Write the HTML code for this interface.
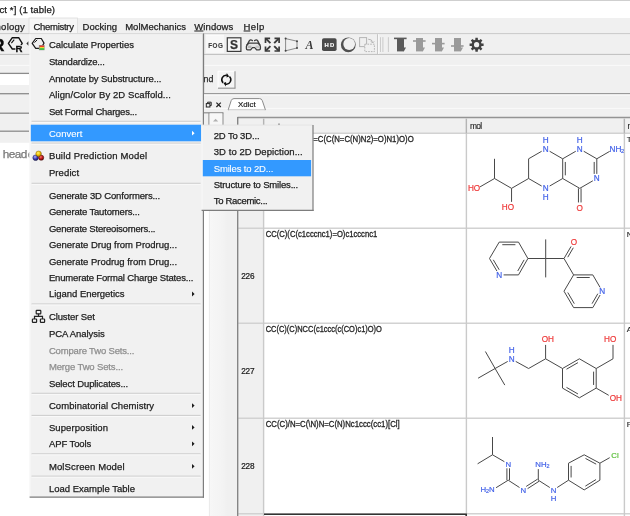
<!DOCTYPE html>
<html><head><meta charset="utf-8"><title>ICM Chemistry menu</title>
<style>
html,body{margin:0;padding:0;background:#f0f0f0;overflow:hidden}
svg{display:block;font-family:"Liberation Sans", sans-serif;filter:blur(0.35px)}
text{white-space:pre}
</style></head><body>
<svg width="630" height="516" viewBox="0 0 630 516">
<rect x="0" y="0" width="630" height="516" fill="#f0f0f0" />
<rect x="0" y="0" width="630" height="18" fill="#ffffff" />
<rect x="0" y="0" width="630" height="0.8" fill="#c4c4c4" />
<text x="-0.5" y="12.7" font-size="9.6" fill="#1a1a1a" textLength="55.5" lengthAdjust="spacing" stroke="#1a1a1a" stroke-width="0.25" >ct *] (1 table)</text>
<rect x="0" y="18" width="630" height="15.5" fill="#f0f0f0" />
<rect x="29" y="18" width="48.5" height="15.5" fill="#f6f6f6" stroke="#dcdcdc" stroke-width="0.8"/>
<text x="-4.4" y="30" font-size="9.5" fill="#1e1e1e" textLength="29.2" lengthAdjust="spacing" stroke="#1e1e1e" stroke-width="0.25" >nology</text>
<text x="33.5" y="30" font-size="9.5" fill="#1e1e1e" textLength="40.5" lengthAdjust="spacing" stroke="#1e1e1e" stroke-width="0.25" >Chemistry</text>
<text x="82.6" y="30" font-size="9.5" fill="#1e1e1e" textLength="34.4" lengthAdjust="spacing" stroke="#1e1e1e" stroke-width="0.25" >Docking</text>
<text x="125.2" y="30" font-size="9.5" fill="#1e1e1e" textLength="60.8" lengthAdjust="spacing" stroke="#1e1e1e" stroke-width="0.25" >MolMechanics</text>
<text x="194.3" y="30" font-size="9.5" fill="#1e1e1e" textLength="39.0" lengthAdjust="spacing" stroke="#1e1e1e" stroke-width="0.25" >Windows</text>
<line x1="194.3" y1="31" x2="203.4" y2="31" stroke="#1e1e1e" stroke-width="1" />
<text x="243.4" y="30" font-size="9.5" fill="#1e1e1e" textLength="20.8" lengthAdjust="spacing" stroke="#1e1e1e" stroke-width="0.25" >Help</text>
<line x1="243.6" y1="31" x2="250.3" y2="31" stroke="#1e1e1e" stroke-width="1" />
<line x1="0" y1="33.6" x2="630" y2="33.6" stroke="#c9c9c9" stroke-width="1" />
<line x1="0" y1="54.4" x2="630" y2="54.4" stroke="#bdbdbd" stroke-width="1" />
<line x1="0" y1="65.4" x2="630" y2="65.4" stroke="#fafafa" stroke-width="1" />
<line x1="0" y1="73.4" x2="29" y2="73.4" stroke="#8c8c8c" stroke-width="1.3" />
<rect x="0" y="74.2" width="29" height="10.8" fill="#ffffff" />
<line x1="0" y1="93.7" x2="29" y2="93.7" stroke="#8c8c8c" stroke-width="1.3" />
<line x1="0" y1="113.2" x2="29" y2="113.2" stroke="#8c8c8c" stroke-width="1.3" />
<line x1="0" y1="131.2" x2="29" y2="131.2" stroke="#8c8c8c" stroke-width="1.3" />
<rect x="0" y="142.8" width="209.5" height="380" fill="#ffffff" />
<text x="2.8" y="157.6" font-size="11.8" fill="#777777" textLength="24.5" lengthAdjust="spacing" stroke="#777777" stroke-width="0.25" >head</text>
<text x="27.8" y="157.6" font-size="11.8" fill="#777777" stroke="#777777" stroke-width="0.25" >er</text>
<line x1="203" y1="93.7" x2="630" y2="93.7" stroke="#9a9a9a" stroke-width="1.3" />
<line x1="203" y1="95" x2="630" y2="95" stroke="#fbfbfb" stroke-width="1" />
<line x1="203" y1="108.4" x2="630" y2="108.4" stroke="#fafafa" stroke-width="1" />
<g stroke="#111" fill="none" stroke-width="1.4" stroke-linejoin="round">
<path d="M8.4 43.3 L12.3 37.7 L18.7 37.7 L22.2 43.3 L18.7 49 L12.3 49 Z"/>
<path d="M11.4 43.2 L14.2 39.7" stroke-width="1.1"/>
</g>
<rect x="15.4" y="45.2" width="7.2" height="7" fill="#f0f0f0" />
<text x="15.5" y="51.8" font-size="9.6" fill="#0c0c0c" font-weight="bold" stroke="#0c0c0c" stroke-width="0.3">R</text>
<text x="-7.6" y="51.3" font-size="16.5" fill="#0c0c0c" font-weight="bold" stroke="#0c0c0c" stroke-width="0.4">R</text>
<path d="M28.4 41.2 L26.4 43.5 L28.4 45.8 Z" fill="#333"/>
<line x1="203.6" y1="33.6" x2="203.6" y2="93.7" stroke="#9a9a9a" stroke-width="1.2" />
<rect x="206" y="35.3" width="18" height="17.7" fill="#f8f8f8" />
<line x1="206" y1="35.3" x2="224" y2="35.3" stroke="#fdfdfd" stroke-width="1" />
<text x="208.2" y="48.3" font-size="6.3" fill="#3a3a3a" textLength="14.6" lengthAdjust="spacing" font-weight="bold" stroke="#3a3a3a" stroke-width="0.12" >FOG</text>
<rect x="227.3" y="37.8" width="13.6" height="13.6" fill="#f6f6f6" stroke="#3c3c3c" stroke-width="1.2"/>
<text x="230" y="49.2" font-size="12" fill="#333" font-weight="bold" stroke="#333" stroke-width="0.25" >S</text>
<g stroke="#3e3e3e" fill="none" stroke-width="1.3" stroke-linejoin="round" stroke-linecap="round">
<path d="M249.2 43.2 L257.8 43.2 Q260.4 44.4 260.4 46.4 L260.4 48.6 Q260.4 49.8 259.2 49.8 L256.6 49.8 L254.8 47.6 L252.4 47.6 L250.6 49.8 L247.6 49.8 Q246.4 49.8 246.4 48.6 L246.4 46.4 Q246.4 44.4 249.2 43.2 Z" fill="#e6e6e6"/>
<path d="M247 45 L249.4 40.6 Q250.2 39.6 251.4 40 L252.4 40.6"/>
<path d="M259.8 45 L257.6 40.6 Q256.8 39.6 255.6 40 L254.6 40.6"/>
</g>
<rect x="247.8" y="45.6" width="3.6" height="2.4" fill="#b8b8b8" />
<rect x="255.6" y="45.6" width="3.6" height="2.4" fill="#c8c8c8" />
<path d="M270.1 38.3 L265.5 38.3 L265.5 42.9" fill="none" stroke="#3a3a3a" stroke-width="1.7" stroke-linejoin="miter"/>
<path d="M265.9 38.699999999999996 L270.4 43.199999999999996" stroke="#3a3a3a" stroke-width="1.9"/>
<path d="M274.5 38.3 L279.1 38.3 L279.1 42.9" fill="none" stroke="#3a3a3a" stroke-width="1.7" stroke-linejoin="miter"/>
<path d="M278.70000000000005 38.699999999999996 L274.20000000000005 43.199999999999996" stroke="#3a3a3a" stroke-width="1.9"/>
<path d="M270.1 51 L265.5 51 L265.5 46.4" fill="none" stroke="#3a3a3a" stroke-width="1.7" stroke-linejoin="miter"/>
<path d="M265.9 50.6 L270.4 46.1" stroke="#3a3a3a" stroke-width="1.9"/>
<path d="M274.5 51 L279.1 51 L279.1 46.4" fill="none" stroke="#3a3a3a" stroke-width="1.7" stroke-linejoin="miter"/>
<path d="M278.70000000000005 50.6 L274.20000000000005 46.1" stroke="#3a3a3a" stroke-width="1.9"/>
<path d="M285.6 38.6 L297 41.2 L297 48 L285.6 50.8 Z" fill="none" stroke="#6a6a6a" stroke-width="0.75"/>
<circle cx="285.6" cy="38.6" r="1" fill="#444"/>
<circle cx="297" cy="41.2" r="1" fill="#444"/>
<circle cx="297" cy="48" r="1" fill="#444"/>
<circle cx="285.6" cy="50.8" r="1" fill="#444"/>
<text x="305.6" y="48.6" font-family="'Liberation Serif', serif" font-style="italic" font-weight="bold" font-size="12" fill="#3a3a3a">A</text>
<rect x="322" y="38.2" width="14.6" height="12.8" fill="#4a4a4a" rx="1.8"/>
<text x="324.4" y="46.9" font-size="5.9" fill="#ffffff" textLength="9.8" lengthAdjust="spacing" font-weight="bold" stroke="#ffffff" stroke-width="0.12" >HD</text>
<circle cx="348.3" cy="44.8" r="7.4" fill="#505050"/>
<circle cx="349.2" cy="44" r="5.9" fill="#f0f0f0"/>
<g stroke="#b4b4b4" fill="none" stroke-width="1">
<rect x="359.6" y="37.6" width="7" height="9"/>
<rect x="364.8" y="44.2" width="9.6" height="7.4" stroke-dasharray="1.6 1.1" fill="#f0f0f0"/>
<path d="M368.2 39.2 Q372.4 39 372.6 42.8 M371 41.4 L372.6 43 L374.2 41.4"/>
</g>
<line x1="377.6" y1="34.2" x2="377.6" y2="54" stroke="#c2c2c2" stroke-width="1" />
<line x1="378.6" y1="34.2" x2="378.6" y2="54" stroke="#fafafa" stroke-width="1" />
<line x1="380.8" y1="37.2" x2="380.8" y2="52" stroke="#b8b8b8" stroke-width="0.9" />
<line x1="382.8" y1="37.2" x2="382.8" y2="52" stroke="#b8b8b8" stroke-width="0.9" />
<line x1="381.8" y1="37.2" x2="381.8" y2="52" stroke="#fafafa" stroke-width="0.9" />
<line x1="388.4" y1="37.2" x2="388.4" y2="52" stroke="#c6c6c6" stroke-width="0.9" />
<rect x="397" y="38" width="7" height="13.4" fill="#5a5a5a" />
<rect x="394" y="37.6" width="12.6" height="1.6" fill="#5a5a5a" />
<path d="M403.8 47.4 L406 47.4 L403.8 51.4 Z" fill="#5a5a5a"/>
<rect x="416" y="38" width="7" height="13.4" fill="#9a9a9a" />
<rect x="413" y="40.2" width="12.6" height="1.6" fill="#9a9a9a" />
<path d="M422.8 47.4 L425 47.4 L422.8 51.4 Z" fill="#9a9a9a"/>
<rect x="435" y="38" width="7" height="13.4" fill="#9a9a9a" />
<rect x="432" y="42.8" width="12.6" height="1.6" fill="#9a9a9a" />
<path d="M441.8 47.4 L444 47.4 L441.8 51.4 Z" fill="#9a9a9a"/>
<rect x="454" y="38" width="7" height="13.4" fill="#9a9a9a" />
<rect x="451" y="45.2" width="12.6" height="1.6" fill="#9a9a9a" />
<path d="M460.8 47.4 L463 47.4 L460.8 51.4 Z" fill="#9a9a9a"/>
<path d="M481.53 43.39 L483.60 43.50 L483.60 45.90 L481.53 46.01 L481.01 47.26 L482.40 48.80 L480.70 50.50 L479.16 49.11 L477.91 49.63 L477.80 51.70 L475.40 51.70 L475.29 49.63 L474.04 49.11 L472.50 50.50 L470.80 48.80 L472.19 47.26 L471.67 46.01 L469.60 45.90 L469.60 43.50 L471.67 43.39 L472.19 42.14 L470.80 40.60 L472.50 38.90 L474.04 40.29 L475.29 39.77 L475.40 37.70 L477.80 37.70 L477.91 39.77 L479.16 40.29 L480.70 38.90 L482.40 40.60 L481.01 42.14 Z" fill="#414141"/>
<circle cx="476.6" cy="44.7" r="2.6" fill="#f0f0f0"/>
<text x="213.4" y="82" font-size="8.8" fill="#2a2a2a" text-anchor="end" stroke="#2a2a2a" stroke-width="0.25" >nd</text>
<rect x="218" y="71.2" width="17" height="17" fill="#f5f5f5" />
<line x1="218" y1="71.2" x2="235" y2="71.2" stroke="#ffffff" stroke-width="1" />
<line x1="218" y1="71.2" x2="218" y2="88.2" stroke="#ffffff" stroke-width="1" />
<line x1="218" y1="88.2" x2="235.4" y2="88.2" stroke="#9a9a9a" stroke-width="1.2" />
<line x1="235" y1="71.2" x2="235" y2="88.6" stroke="#9a9a9a" stroke-width="1.2" />
<path d="M223.12 82.88 A4.5 4.5 0 0 1 226.93 75.24" fill="none" stroke="#111" stroke-width="1.5"/>
<path d="M226.77 72.92 L229.18 76.50 L226.45 77.51 Z" fill="#111"/>
<path d="M229.48 76.52 A4.5 4.5 0 0 1 225.67 84.16" fill="none" stroke="#111" stroke-width="1.5"/>
<path d="M225.83 86.48 L223.42 82.90 L226.15 81.89 Z" fill="#111"/>
<g stroke="#222" fill="none" stroke-width="1">
<rect x="206.3" y="103.6" width="3.6" height="3.4"/>
<path d="M207.6 103.4 L207.6 102.2 L211.2 102.2 L211.2 105.6 L210 105.6"/>
<path d="M216.4 102.6 L220.8 107 M220.8 102.6 L216.4 107" stroke-width="1.2"/>
</g>
<path d="M228.2 109.8 L231.2 100.6 Q231.9 98.6 234 98.6 L259.6 98.6 Q261.6 98.6 262.3 100.6 L265.4 109.8 Z" fill="#ffffff" stroke="#8a8a8a" stroke-width="1"/>
<line x1="228.8" y1="110" x2="264.8" y2="110" stroke="#ffffff" stroke-width="1.2" />
<text x="238" y="107.2" font-size="7.9" fill="#1a1a1a" textLength="17.6" lengthAdjust="spacing" stroke="#1a1a1a" stroke-width="0.2">Xdict</text>
<line x1="204" y1="112.8" x2="223.4" y2="112.8" stroke="#8c8c8c" stroke-width="1.2" />
<line x1="209" y1="112.8" x2="209" y2="142.8" stroke="#8c8c8c" stroke-width="1.2" />
<line x1="222.9" y1="112.8" x2="222.9" y2="126" stroke="#8c8c8c" stroke-width="1.2" />
<rect x="209.6" y="113.4" width="12.7" height="403" fill="#f7f7f7" />
<linearGradient id="sg" x1="0" x2="1" y1="0" y2="0"><stop offset="0" stop-color="#f7f7f7"/><stop offset="0.75" stop-color="#f3f3f3"/><stop offset="1" stop-color="#f0f0f0"/></linearGradient>
<rect x="209.6" y="142.8" width="17.4" height="374" fill="url(#sg)" />
<line x1="209.4" y1="142.8" x2="209.4" y2="516" stroke="#e6e6e6" stroke-width="0.8" />
<path d="M213 121.6 L215.6 118.8 L218.2 121.6 Z" fill="#b0b0b0"/>
<rect x="238.2" y="118" width="391.8" height="398" fill="#ffffff" />
<rect x="238.2" y="118" width="391.8" height="15" fill="#f0f0f0" />
<rect x="238.2" y="118" width="25.4" height="398" fill="#f0f0f0" />
<line x1="238.2" y1="133.2" x2="630" y2="133.2" stroke="#d2d2d2" stroke-width="1.4" />
<line x1="238.2" y1="228.3" x2="630" y2="228.3" stroke="#d2d2d2" stroke-width="1.4" />
<line x1="238.2" y1="323.2" x2="630" y2="323.2" stroke="#d2d2d2" stroke-width="1.4" />
<line x1="238.2" y1="418.3" x2="630" y2="418.3" stroke="#d2d2d2" stroke-width="1.4" />
<line x1="238.2" y1="513.7" x2="630" y2="513.7" stroke="#d2d2d2" stroke-width="1.4" />
<line x1="263.6" y1="118" x2="263.6" y2="516" stroke="#cacaca" stroke-width="1.4" />
<line x1="263.6" y1="118" x2="263.6" y2="133.2" stroke="#b4b4b4" stroke-width="1.2" />
<line x1="466.4" y1="118" x2="466.4" y2="516" stroke="#cacaca" stroke-width="1.4" />
<line x1="466.4" y1="118" x2="466.4" y2="133.2" stroke="#b4b4b4" stroke-width="1.2" />
<line x1="624.4" y1="118" x2="624.4" y2="516" stroke="#cacaca" stroke-width="1.4" />
<line x1="624.4" y1="118" x2="624.4" y2="133.2" stroke="#b4b4b4" stroke-width="1.2" />
<line x1="237.6" y1="117.6" x2="630" y2="117.6" stroke="#8e8e8e" stroke-width="1.5" />
<line x1="237.7" y1="117" x2="237.7" y2="516" stroke="#858585" stroke-width="1.4" />
<line x1="238.9" y1="118.4" x2="630" y2="118.4" stroke="#d8d8d8" stroke-width="0.8" />
<text x="470.1" y="128.9" font-size="8.4" fill="#222" textLength="12.1" lengthAdjust="spacing" stroke="#222" stroke-width="0.12" >mol</text>
<text x="627.6" y="128.9" font-size="8.4" fill="#222" stroke="#222" stroke-width="0.12" >n</text>
<circle cx="279" cy="124.2" r="0.7" fill="#333"/>
<text x="266" y="142" font-size="8.5" fill="#2a2a2a" textLength="47" lengthAdjust="spacingAndGlyphs" stroke="#222" stroke-width="0.3">CC1CC(C(O)C(O)C)NC=2C(</text>
<text x="313.3" y="142" font-size="8.5" fill="#2a2a2a" textLength="100.4" lengthAdjust="spacingAndGlyphs" stroke="#222" stroke-width="0.3">=C(C(N=C(N)N2)=O)N1)O)O</text>
<text x="265.7" y="237" font-size="8.5" fill="#2a2a2a" textLength="111.6" lengthAdjust="spacingAndGlyphs" stroke="#222" stroke-width="0.3">CC(C)(C(c1cccnc1)=O)c1cccnc1</text>
<text x="265.7" y="332" font-size="8.5" fill="#2a2a2a" textLength="116.2" lengthAdjust="spacingAndGlyphs" stroke="#222" stroke-width="0.3">CC(C)(C)NCC(c1ccc(c(CO)c1)O)O</text>
<text x="265.7" y="427" font-size="8.5" fill="#2a2a2a" textLength="134.0" lengthAdjust="spacingAndGlyphs" stroke="#222" stroke-width="0.3">CC(C)/N=C(\N)N=C(N)Nc1ccc(cc1)[Cl]</text>
<text x="241.3" y="279" font-size="8.2" fill="#1c1c1c" textLength="13.2" lengthAdjust="spacing" stroke="#1c1c1c" stroke-width="0.22">226</text>
<text x="241.3" y="374" font-size="8.2" fill="#1c1c1c" textLength="13.2" lengthAdjust="spacing" stroke="#1c1c1c" stroke-width="0.22">227</text>
<text x="241.3" y="469" font-size="8.2" fill="#1c1c1c" textLength="13.2" lengthAdjust="spacing" stroke="#1c1c1c" stroke-width="0.22">228</text>
<text x="626.8" y="142.2" font-size="8" fill="#222" stroke="#222" stroke-width="0.12" >T</text>
<text x="626.8" y="237.2" font-size="8" fill="#222" stroke="#222" stroke-width="0.12" >N</text>
<text x="626.8" y="332.2" font-size="8" fill="#222" stroke="#222" stroke-width="0.12" >A</text>
<text x="626.8" y="427.2" font-size="8" fill="#222" stroke="#222" stroke-width="0.12" >P</text>
<line x1="264" y1="514.2" x2="467" y2="514.2" stroke="#333" stroke-width="1.6" />
<line x1="466.2" y1="514" x2="466.2" y2="516" stroke="#333" stroke-width="1.6" />
<line x1="494.5" y1="158.8" x2="494.5" y2="178.5" stroke="#484848" stroke-width="1.0" />
<line x1="494.5" y1="178.5" x2="480.05" y2="186.85" stroke="#484848" stroke-width="1.0" />
<line x1="494.5" y1="178.5" x2="511.55" y2="188.35" stroke="#484848" stroke-width="1.0" />
<line x1="511.55" y1="188.35" x2="511.55" y2="201.85" stroke="#484848" stroke-width="1.0" />
<line x1="511.55" y1="188.35" x2="528.6" y2="178.5" stroke="#484848" stroke-width="1.0" />
<line x1="528.6" y1="178.5" x2="528.6" y2="158.8" stroke="#484848" stroke-width="1.0" />
<line x1="528.6" y1="158.8" x2="541.67" y2="151.25" stroke="#484848" stroke-width="1.0" />
<line x1="549.63" y1="151.25" x2="562.7" y2="158.8" stroke="#484848" stroke-width="1.0" />
<line x1="562.7" y1="158.8" x2="562.7" y2="178.5" stroke="#484848" stroke-width="1.0" />
<line x1="565.3" y1="161.95" x2="565.3" y2="175.35" stroke="#484848" stroke-width="1.0" />
<line x1="562.7" y1="178.5" x2="549.63" y2="186.05" stroke="#484848" stroke-width="1.0" />
<line x1="541.67" y1="186.05" x2="528.6" y2="178.5" stroke="#484848" stroke-width="1.0" />
<line x1="562.7" y1="158.8" x2="575.77" y2="151.25" stroke="#484848" stroke-width="1.0" />
<line x1="583.73" y1="151.25" x2="596.8" y2="158.8" stroke="#484848" stroke-width="1.0" />
<line x1="596.8" y1="158.8" x2="609.69" y2="151.35" stroke="#484848" stroke-width="1.0" />
<line x1="596.8" y1="158.8" x2="596.8" y2="173.9" stroke="#484848" stroke-width="1.0" />
<line x1="594.2" y1="161.95" x2="594.2" y2="173.9" stroke="#484848" stroke-width="1.0" />
<line x1="592.82" y1="180.8" x2="579.75" y2="188.35" stroke="#484848" stroke-width="1.0" />
<line x1="579.75" y1="188.35" x2="562.7" y2="178.5" stroke="#484848" stroke-width="1.0" />
<line x1="578.45" y1="188.35" x2="578.45" y2="202.45" stroke="#484848" stroke-width="1.0" />
<line x1="581.05" y1="188.35" x2="581.05" y2="202.45" stroke="#484848" stroke-width="1.0" />
<text x="474.05" y="191.3" font-size="8.2" fill="#ee3a3a" stroke="#ee3a3a" stroke-width="0.2" text-anchor="middle">HO</text>
<text x="507.95" y="210.4" font-size="8.2" fill="#ee3a3a" stroke="#ee3a3a" stroke-width="0.2" text-anchor="middle">HO</text>
<text x="545.65" y="151.9" font-size="8.2" fill="#4463e8" stroke="#4463e8" stroke-width="0.2" text-anchor="middle">N</text>
<text x="545.65" y="143.1" font-size="8.2" fill="#4463e8" stroke="#4463e8" stroke-width="0.2" text-anchor="middle">H</text>
<text x="545.65" y="191.3" font-size="8.2" fill="#4463e8" stroke="#4463e8" stroke-width="0.2" text-anchor="middle">N</text>
<text x="545.65" y="199.9" font-size="8.2" fill="#4463e8" stroke="#4463e8" stroke-width="0.2" text-anchor="middle">H</text>
<text x="579.75" y="151.9" font-size="8.2" fill="#4463e8" stroke="#4463e8" stroke-width="0.2" text-anchor="middle">N</text>
<text x="579.75" y="143.1" font-size="8.2" fill="#4463e8" stroke="#4463e8" stroke-width="0.2" text-anchor="middle">H</text>
<text x="615.45" y="151.9" font-size="8.2" fill="#4463e8" stroke="#4463e8" stroke-width="0.2" text-anchor="middle">NH</text>
<text x="622.45" y="152.77" font-size="5.6" fill="#4463e8" stroke="#4463e8" stroke-width="0.2" text-anchor="middle">2</text>
<text x="596.8" y="181.45" font-size="8.2" fill="#4463e8" stroke="#4463e8" stroke-width="0.2" text-anchor="middle">N</text>
<text x="579.75" y="211.0" font-size="8.2" fill="#ee3a3a" stroke="#ee3a3a" stroke-width="0.2" text-anchor="middle">O</text>
<line x1="527.9" y1="258.5" x2="518.5" y2="242.1" stroke="#484848" stroke-width="1.0" />
<line x1="518.5" y1="242.1" x2="499.2" y2="242.1" stroke="#484848" stroke-width="1.0" />
<line x1="515.41" y1="244.7" x2="502.29" y2="244.7" stroke="#484848" stroke-width="1.0" />
<line x1="499.2" y1="242.1" x2="489.5" y2="258.5" stroke="#484848" stroke-width="1.0" />
<line x1="489.5" y1="258.5" x2="496.96" y2="271.11" stroke="#484848" stroke-width="1.0" />
<line x1="493.29" y1="259.8" x2="499.2" y2="269.79" stroke="#484848" stroke-width="1.0" />
<line x1="503.6" y1="274.9" x2="518.5" y2="274.9" stroke="#484848" stroke-width="1.0" />
<line x1="518.5" y1="274.9" x2="527.9" y2="258.5" stroke="#484848" stroke-width="1.0" />
<line x1="517.75" y1="270.98" x2="524.14" y2="259.83" stroke="#484848" stroke-width="1.0" />
<line x1="527.9" y1="258.5" x2="545.7" y2="258.5" stroke="#484848" stroke-width="1.0" />
<line x1="545.7" y1="258.5" x2="545.7" y2="239.4" stroke="#484848" stroke-width="1.0" />
<line x1="545.7" y1="258.5" x2="545.7" y2="277.4" stroke="#484848" stroke-width="1.0" />
<line x1="545.7" y1="258.5" x2="564.0" y2="258.5" stroke="#484848" stroke-width="1.0" />
<line x1="564.0" y1="258.5" x2="571.07" y2="246.42" stroke="#484848" stroke-width="1.0" />
<line x1="567.78" y1="257.19" x2="573.32" y2="247.73" stroke="#484848" stroke-width="1.0" />
<line x1="564.0" y1="258.5" x2="573.6" y2="274.9" stroke="#484848" stroke-width="1.0" />
<line x1="573.6" y1="274.9" x2="592.8" y2="274.9" stroke="#484848" stroke-width="1.0" />
<line x1="576.67" y1="277.5" x2="589.73" y2="277.5" stroke="#484848" stroke-width="1.0" />
<line x1="592.8" y1="274.9" x2="600.08" y2="287.4" stroke="#484848" stroke-width="1.0" />
<line x1="600.09" y1="295.01" x2="592.8" y2="307.6" stroke="#484848" stroke-width="1.0" />
<line x1="597.84" y1="293.7" x2="592.07" y2="303.67" stroke="#484848" stroke-width="1.0" />
<line x1="592.8" y1="307.6" x2="573.6" y2="307.6" stroke="#484848" stroke-width="1.0" />
<line x1="573.6" y1="307.6" x2="564.0" y2="291.2" stroke="#484848" stroke-width="1.0" />
<line x1="574.31" y1="303.66" x2="567.78" y2="292.51" stroke="#484848" stroke-width="1.0" />
<line x1="564.0" y1="291.2" x2="573.6" y2="274.9" stroke="#484848" stroke-width="1.0" />
<text x="499.2" y="277.85" font-size="8.2" fill="#4463e8" stroke="#4463e8" stroke-width="0.2" text-anchor="middle">N</text>
<text x="602.3" y="294.15" font-size="8.2" fill="#4463e8" stroke="#4463e8" stroke-width="0.2" text-anchor="middle">N</text>
<text x="574.0" y="245.05" font-size="8.2" fill="#ee3a3a" stroke="#ee3a3a" stroke-width="0.2" text-anchor="middle">O</text>
<line x1="495.1" y1="368.5" x2="485.4" y2="351.5" stroke="#484848" stroke-width="1.0" />
<line x1="495.1" y1="368.5" x2="478.1" y2="378.2" stroke="#484848" stroke-width="1.0" />
<line x1="495.1" y1="368.5" x2="504.8" y2="385.1" stroke="#484848" stroke-width="1.0" />
<line x1="495.1" y1="368.5" x2="507.69" y2="361.45" stroke="#484848" stroke-width="1.0" />
<line x1="515.73" y1="361.42" x2="528.6" y2="368.5" stroke="#484848" stroke-width="1.0" />
<line x1="528.6" y1="368.5" x2="545.6" y2="358.8" stroke="#484848" stroke-width="1.0" />
<line x1="545.6" y1="358.8" x2="545.6" y2="344.9" stroke="#484848" stroke-width="1.0" />
<line x1="545.6" y1="358.8" x2="562.5" y2="368.5" stroke="#484848" stroke-width="1.0" />
<line x1="562.5" y1="368.5" x2="579.4" y2="358.8" stroke="#484848" stroke-width="1.0" />
<line x1="566.5" y1="369.2" x2="577.99" y2="362.61" stroke="#484848" stroke-width="1.0" />
<line x1="579.4" y1="358.8" x2="596.2" y2="368.5" stroke="#484848" stroke-width="1.0" />
<line x1="596.2" y1="368.5" x2="596.2" y2="388.1" stroke="#484848" stroke-width="1.0" />
<line x1="593.6" y1="371.64" x2="593.6" y2="384.96" stroke="#484848" stroke-width="1.0" />
<line x1="596.2" y1="388.1" x2="579.4" y2="397.8" stroke="#484848" stroke-width="1.0" />
<line x1="579.4" y1="397.8" x2="562.5" y2="388.1" stroke="#484848" stroke-width="1.0" />
<line x1="577.99" y1="393.99" x2="566.5" y2="387.4" stroke="#484848" stroke-width="1.0" />
<line x1="562.5" y1="388.1" x2="562.5" y2="368.5" stroke="#484848" stroke-width="1.0" />
<line x1="596.2" y1="368.5" x2="613.0" y2="358.8" stroke="#484848" stroke-width="1.0" />
<line x1="613.0" y1="358.8" x2="613.0" y2="344.9" stroke="#484848" stroke-width="1.0" />
<line x1="596.2" y1="388.1" x2="608.69" y2="395.3" stroke="#484848" stroke-width="1.0" />
<text x="511.7" y="362.15" font-size="8.2" fill="#4463e8" stroke="#4463e8" stroke-width="0.2" text-anchor="middle">N</text>
<text x="511.7" y="353.35" font-size="8.2" fill="#4463e8" stroke="#4463e8" stroke-width="0.2" text-anchor="middle">H</text>
<text x="547.8" y="342.25" font-size="8.2" fill="#ee3a3a" stroke="#ee3a3a" stroke-width="0.2" text-anchor="middle">OH</text>
<text x="610.2" y="342.25" font-size="8.2" fill="#ee3a3a" stroke="#ee3a3a" stroke-width="0.2" text-anchor="middle">HO</text>
<text x="615.8" y="400.85" font-size="8.2" fill="#ee3a3a" stroke="#ee3a3a" stroke-width="0.2" text-anchor="middle">OH</text>
<line x1="492.5" y1="454.8" x2="492.5" y2="437.0" stroke="#484848" stroke-width="1.0" />
<line x1="492.5" y1="454.8" x2="477.6" y2="463.8" stroke="#484848" stroke-width="1.0" />
<line x1="492.5" y1="454.8" x2="504.39" y2="461.69" stroke="#484848" stroke-width="1.0" />
<line x1="506.9" y1="468.3" x2="506.9" y2="480.2" stroke="#484848" stroke-width="1.0" />
<line x1="509.5" y1="468.3" x2="509.5" y2="480.2" stroke="#484848" stroke-width="1.0" />
<line x1="508.2" y1="480.2" x2="496.06" y2="487.71" stroke="#484848" stroke-width="1.0" />
<line x1="508.2" y1="480.2" x2="519.51" y2="487.51" stroke="#484848" stroke-width="1.0" />
<line x1="527.6" y1="488.62" x2="539.0" y2="481.29" stroke="#484848" stroke-width="1.0" />
<line x1="526.2" y1="486.43" x2="537.6" y2="479.11" stroke="#484848" stroke-width="1.0" />
<line x1="538.3" y1="480.2" x2="538.3" y2="469.1" stroke="#484848" stroke-width="1.0" />
<line x1="538.3" y1="480.2" x2="549.79" y2="487.53" stroke="#484848" stroke-width="1.0" />
<line x1="557.19" y1="487.51" x2="568.5" y2="480.2" stroke="#484848" stroke-width="1.0" />
<line x1="568.5" y1="480.2" x2="568.5" y2="463.2" stroke="#484848" stroke-width="1.0" />
<line x1="571.1" y1="477.48" x2="571.1" y2="465.92" stroke="#484848" stroke-width="1.0" />
<line x1="568.5" y1="463.2" x2="584.2" y2="454.8" stroke="#484848" stroke-width="1.0" />
<line x1="584.2" y1="454.8" x2="599.9" y2="463.2" stroke="#484848" stroke-width="1.0" />
<line x1="585.49" y1="458.44" x2="596.16" y2="464.15" stroke="#484848" stroke-width="1.0" />
<line x1="599.9" y1="463.2" x2="599.9" y2="480.2" stroke="#484848" stroke-width="1.0" />
<line x1="599.9" y1="480.2" x2="584.2" y2="489.9" stroke="#484848" stroke-width="1.0" />
<line x1="596.02" y1="479.54" x2="585.35" y2="486.14" stroke="#484848" stroke-width="1.0" />
<line x1="584.2" y1="489.9" x2="568.5" y2="480.2" stroke="#484848" stroke-width="1.0" />
<line x1="599.9" y1="463.2" x2="609.7" y2="457.66" stroke="#484848" stroke-width="1.0" />
<text x="508.2" y="466.71" font-size="7.8" fill="#4463e8" stroke="#4463e8" stroke-width="0.2" text-anchor="middle">N</text>
<text x="483.4" y="492.41" font-size="7.8" fill="#4463e8" stroke="#4463e8" stroke-width="0.2" text-anchor="middle">H</text>
<text x="487.6" y="493.34" font-size="5.4" fill="#4463e8" stroke="#4463e8" stroke-width="0.2" text-anchor="middle">2</text>
<text x="491.8" y="492.41" font-size="7.8" fill="#4463e8" stroke="#4463e8" stroke-width="0.2" text-anchor="middle">N</text>
<text x="523.2" y="492.71" font-size="7.8" fill="#4463e8" stroke="#4463e8" stroke-width="0.2" text-anchor="middle">N</text>
<text x="540.9" y="466.71" font-size="7.8" fill="#4463e8" stroke="#4463e8" stroke-width="0.2" text-anchor="middle">NH</text>
<text x="547.9" y="467.64" font-size="5.4" fill="#4463e8" stroke="#4463e8" stroke-width="0.2" text-anchor="middle">2</text>
<text x="553.5" y="492.71" font-size="7.8" fill="#4463e8" stroke="#4463e8" stroke-width="0.2" text-anchor="middle">N</text>
<text x="553.5" y="500.91" font-size="7.8" fill="#4463e8" stroke="#4463e8" stroke-width="0.2" text-anchor="middle">H</text>
<text x="615.0" y="457.81" font-size="7.8" fill="#5bbf3a" stroke="#5bbf3a" stroke-width="0.2" text-anchor="middle">Cl</text>
<rect x="29.6" y="33.6" width="173.6" height="463.59999999999997" fill="#f1f1f1" />
<line x1="30.0" y1="33.6" x2="30.0" y2="497.2" stroke="#f9f9f9" stroke-width="1" />
<line x1="203.39999999999998" y1="33.6" x2="203.39999999999998" y2="497.8" stroke="#7d7d7d" stroke-width="1.2" />
<line x1="29.6" y1="497.2" x2="204.0" y2="497.2" stroke="#7d7d7d" stroke-width="1.2" />
<line x1="29.6" y1="33.6" x2="203.2" y2="33.6" stroke="#dadada" stroke-width="0.8" />
<rect x="30.8" y="124.7" width="170.4" height="16.6" fill="#3399ff" />
<text x="48.9" y="48.3" font-size="9.5" fill="#1c1c1c" textLength="85.0" lengthAdjust="spacing" stroke="#1c1c1c" stroke-width="0.25" >Calculate Properties</text>
<text x="48.9" y="65.0" font-size="9.5" fill="#1c1c1c" textLength="55.9" lengthAdjust="spacing" stroke="#1c1c1c" stroke-width="0.25" >Standardize...</text>
<text x="48.9" y="81.7" font-size="9.5" fill="#1c1c1c" textLength="112.5" lengthAdjust="spacing" stroke="#1c1c1c" stroke-width="0.25" >Annotate by Substructure...</text>
<text x="48.9" y="98.4" font-size="9.5" fill="#1c1c1c" textLength="122.0" lengthAdjust="spacing" stroke="#1c1c1c" stroke-width="0.25" >Align/Color By 2D Scaffold...</text>
<text x="48.9" y="114.7" font-size="9.5" fill="#1c1c1c" textLength="88.2" lengthAdjust="spacing" stroke="#1c1c1c" stroke-width="0.25" >Set Formal Charges...</text>
<text x="48.9" y="136.6" font-size="9.5" fill="#ffffff" textLength="33.5" lengthAdjust="spacing" stroke="#ffffff" stroke-width="0.1" >Convert</text>
<path d="M192 130.79999999999998 L194.6 133.2 L192 135.6 Z" fill="#ffffff"/>
<text x="48.9" y="159.4" font-size="9.5" fill="#1c1c1c" textLength="98.2" lengthAdjust="spacing" stroke="#1c1c1c" stroke-width="0.25" >Build Prediction Model</text>
<text x="48.9" y="176.2" font-size="9.5" fill="#1c1c1c" textLength="30.2" lengthAdjust="spacing" stroke="#1c1c1c" stroke-width="0.25" >Predict</text>
<text x="48.9" y="198.8" font-size="9.5" fill="#1c1c1c" textLength="111.2" lengthAdjust="spacing" stroke="#1c1c1c" stroke-width="0.25" >Generate 3D Conformers...</text>
<text x="48.9" y="215.4" font-size="9.5" fill="#1c1c1c" textLength="90.9" lengthAdjust="spacing" stroke="#1c1c1c" stroke-width="0.25" >Generate Tautomers...</text>
<text x="48.9" y="231.8" font-size="9.5" fill="#1c1c1c" textLength="106.6" lengthAdjust="spacing" stroke="#1c1c1c" stroke-width="0.25" >Generate Stereoisomers...</text>
<text x="48.9" y="248.2" font-size="9.5" fill="#1c1c1c" textLength="128.2" lengthAdjust="spacing" stroke="#1c1c1c" stroke-width="0.25" >Generate Drug from Prodrug...</text>
<text x="48.9" y="264.7" font-size="9.5" fill="#1c1c1c" textLength="128.2" lengthAdjust="spacing" stroke="#1c1c1c" stroke-width="0.25" >Generate Prodrug from Drug...</text>
<text x="48.9" y="281.1" font-size="9.5" fill="#1c1c1c" textLength="144.4" lengthAdjust="spacing" stroke="#1c1c1c" stroke-width="0.25" >Enumerate Formal Charge States...</text>
<text x="48.9" y="297.4" font-size="9.5" fill="#1c1c1c" textLength="75.6" lengthAdjust="spacing" stroke="#1c1c1c" stroke-width="0.25" >Ligand Energetics</text>
<path d="M192 291.6 L194.6 294 L192 296.4 Z" fill="#1c1c1c"/>
<text x="48.9" y="320.4" font-size="9.5" fill="#1c1c1c" textLength="45.9" lengthAdjust="spacing" stroke="#1c1c1c" stroke-width="0.25" >Cluster Set</text>
<text x="48.9" y="337.0" font-size="9.5" fill="#1c1c1c" textLength="55.9" lengthAdjust="spacing" stroke="#1c1c1c" stroke-width="0.25" >PCA Analysis</text>
<text x="48.9" y="353.6" font-size="9.5" fill="#8e8e8e" textLength="85.5" lengthAdjust="spacing" stroke="#8e8e8e" stroke-width="0.25" >Compare Two Sets...</text>
<text x="48.9" y="370.1" font-size="9.5" fill="#8e8e8e" textLength="74.2" lengthAdjust="spacing" stroke="#8e8e8e" stroke-width="0.25" >Merge Two Sets...</text>
<text x="48.9" y="386.7" font-size="9.5" fill="#1c1c1c" textLength="79.3" lengthAdjust="spacing" stroke="#1c1c1c" stroke-width="0.25" >Select Duplicates...</text>
<text x="48.9" y="409.0" font-size="9.5" fill="#1c1c1c" textLength="105.2" lengthAdjust="spacing" stroke="#1c1c1c" stroke-width="0.25" >Combinatorial Chemistry</text>
<path d="M192 403.20000000000005 L194.6 405.6 L192 408.0 Z" fill="#1c1c1c"/>
<text x="48.9" y="430.8" font-size="9.5" fill="#1c1c1c" textLength="59.1" lengthAdjust="spacing" stroke="#1c1c1c" stroke-width="0.25" >Superposition</text>
<path d="M192 425.0 L194.6 427.4 L192 429.79999999999995 Z" fill="#1c1c1c"/>
<text x="48.9" y="447.2" font-size="9.5" fill="#1c1c1c" textLength="42.4" lengthAdjust="spacing" stroke="#1c1c1c" stroke-width="0.25" >APF Tools</text>
<path d="M192 441.40000000000003 L194.6 443.8 L192 446.2 Z" fill="#1c1c1c"/>
<text x="48.9" y="469.7" font-size="9.5" fill="#1c1c1c" textLength="75.6" lengthAdjust="spacing" stroke="#1c1c1c" stroke-width="0.25" >MolScreen Model</text>
<path d="M192 463.90000000000003 L194.6 466.3 L192 468.7 Z" fill="#1c1c1c"/>
<text x="48.9" y="492.0" font-size="9.5" fill="#1c1c1c" textLength="86.1" lengthAdjust="spacing" stroke="#1c1c1c" stroke-width="0.25" >Load Example Table</text>
<line x1="31.6" y1="121.3" x2="200.6" y2="121.3" stroke="#c6c6c6" stroke-width="1" />
<line x1="31.6" y1="122.3" x2="200.6" y2="122.3" stroke="#fafafa" stroke-width="1" />
<line x1="31.6" y1="143.2" x2="200.6" y2="143.2" stroke="#c6c6c6" stroke-width="1" />
<line x1="31.6" y1="144.2" x2="200.6" y2="144.2" stroke="#fafafa" stroke-width="1" />
<line x1="31.6" y1="183.3" x2="200.6" y2="183.3" stroke="#c6c6c6" stroke-width="1" />
<line x1="31.6" y1="184.3" x2="200.6" y2="184.3" stroke="#fafafa" stroke-width="1" />
<line x1="31.6" y1="304" x2="200.6" y2="304" stroke="#c6c6c6" stroke-width="1" />
<line x1="31.6" y1="305" x2="200.6" y2="305" stroke="#fafafa" stroke-width="1" />
<line x1="31.6" y1="393.3" x2="200.6" y2="393.3" stroke="#c6c6c6" stroke-width="1" />
<line x1="31.6" y1="394.3" x2="200.6" y2="394.3" stroke="#fafafa" stroke-width="1" />
<line x1="31.6" y1="415.4" x2="200.6" y2="415.4" stroke="#c6c6c6" stroke-width="1" />
<line x1="31.6" y1="416.4" x2="200.6" y2="416.4" stroke="#fafafa" stroke-width="1" />
<line x1="31.6" y1="453.9" x2="200.6" y2="453.9" stroke="#c6c6c6" stroke-width="1" />
<line x1="31.6" y1="454.9" x2="200.6" y2="454.9" stroke="#fafafa" stroke-width="1" />
<line x1="31.6" y1="476.2" x2="200.6" y2="476.2" stroke="#c6c6c6" stroke-width="1" />
<line x1="31.6" y1="477.2" x2="200.6" y2="477.2" stroke="#fafafa" stroke-width="1" />
<g stroke="#1a1a1a" fill="none" stroke-width="1.2" stroke-linejoin="round">
<path d="M32.2 43.3 L35.7 38.5 L41.3 38.5 L44 43.1 L41 48.3 L35.7 48.3 Z"/>
<path d="M34.5 42.6 L37.2 39.8" stroke-width="1"/>
</g>
<rect x="38.9" y="45" width="5.6" height="5.2" fill="#8a8a8a" />
<rect x="39.7" y="45.6" width="4.5" height="1.6" fill="#f03c28" />
<rect x="39.7" y="47.1" width="4.5" height="1.3" fill="#f2e02c" />
<rect x="39.7" y="48.3" width="4.5" height="1.5" fill="#35c83a" />
<radialGradient id="gy" cx="0.4" cy="0.35" r="0.7"><stop offset="0" stop-color="#fff36a"/><stop offset="0.55" stop-color="#f0c000"/><stop offset="1" stop-color="#8a5a00"/></radialGradient>
<radialGradient id="gb" cx="0.4" cy="0.35" r="0.7"><stop offset="0" stop-color="#b0b0ff"/><stop offset="0.55" stop-color="#3c3cb4"/><stop offset="1" stop-color="#101050"/></radialGradient>
<radialGradient id="gr" cx="0.4" cy="0.35" r="0.7"><stop offset="0" stop-color="#ff7070"/><stop offset="0.55" stop-color="#b81414"/><stop offset="1" stop-color="#500404"/></radialGradient>
<circle cx="35.6" cy="157.7" r="2.8" fill="url(#gb)" stroke="#1a1a40" stroke-width="0.4"/>
<circle cx="41.2" cy="157.7" r="2.6" fill="url(#gr)" stroke="#401010" stroke-width="0.4"/>
<circle cx="38.6" cy="153.8" r="2.8" fill="url(#gy)" stroke="#6a4a00" stroke-width="0.4"/>
<g stroke="#222" fill="none" stroke-width="1.2">
<rect x="36.2" y="310.4" width="4.6" height="3.4" rx="0.6"/>
<rect x="32.4" y="319" width="4.2" height="3.4" rx="0.6"/>
<rect x="40.4" y="319" width="4.2" height="3.4" rx="0.6"/>
<path d="M38.5 313.8 L38.5 316.4 M34.5 319 L34.5 316.4 L42.5 316.4 L42.5 319"/>
</g>
<rect x="201.6" y="125.0" width="111.4" height="85.30000000000001" fill="#f1f1f1" />
<line x1="202.0" y1="125.0" x2="202.0" y2="210.3" stroke="#f9f9f9" stroke-width="1" />
<line x1="201.6" y1="125.0" x2="313" y2="125.0" stroke="#e2e2e2" stroke-width="0.8" />
<line x1="313" y1="125.0" x2="313" y2="210.9" stroke="#7d7d7d" stroke-width="1.2" />
<line x1="201.6" y1="210.3" x2="313.6" y2="210.3" stroke="#7d7d7d" stroke-width="1.2" />
<rect x="202.8" y="160" width="108.3" height="16.3" fill="#3399ff" />
<text x="213.7" y="138.9" font-size="9.5" fill="#1c1c1c" textLength="45.9" lengthAdjust="spacing" stroke="#1c1c1c" stroke-width="0.25" >2D To 3D...</text>
<text x="213.7" y="155.4" font-size="9.5" fill="#1c1c1c" textLength="89.0" lengthAdjust="spacing" stroke="#1c1c1c" stroke-width="0.25" >3D to 2D Depiction...</text>
<text x="213.7" y="171.6" font-size="9.5" fill="#ffffff" textLength="59.7" lengthAdjust="spacing" stroke="#ffffff" stroke-width="0.1" >Smiles to 2D...</text>
<text x="213.7" y="188.0" font-size="9.5" fill="#1c1c1c" textLength="84.5" lengthAdjust="spacing" stroke="#1c1c1c" stroke-width="0.25" >Structure to Smiles...</text>
<text x="213.7" y="204.4" font-size="9.5" fill="#1c1c1c" textLength="53.9" lengthAdjust="spacing" stroke="#1c1c1c" stroke-width="0.25" >To Racemic...</text>
</svg>
</body></html>
